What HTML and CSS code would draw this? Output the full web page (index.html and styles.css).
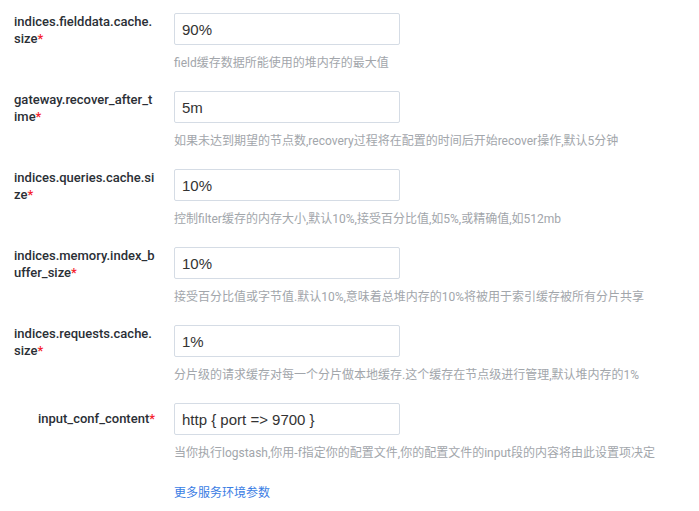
FILE: index.html
```html
<!DOCTYPE html>
<html lang="zh">
<head>
<meta charset="utf-8">
<link rel="stylesheet" href="styles.css">
</head>
<body>
<form class="form">
  <div class="row">
    <label class="label">indices.fielddata.cache.size<span class="req">*</span></label>
    <div class="control">
      <input class="input" value="90%">
      <div class="help">field缓存数据所能使用的堆内存的最大值</div>
    </div>
  </div>
  <div class="row">
    <label class="label">gateway.recover_after_time<span class="req">*</span></label>
    <div class="control">
      <input class="input" value="5m">
      <div class="help">如果未达到期望的节点数,recovery过程将在配置的时间后开始recover操作,默认5分钟</div>
    </div>
  </div>
  <div class="row">
    <label class="label">indices.queries.cache.size<span class="req">*</span></label>
    <div class="control">
      <input class="input" value="10%">
      <div class="help">控制filter缓存的内存大小,默认10%,接受百分比值,如5%,或精确值,如512mb</div>
    </div>
  </div>
  <div class="row">
    <label class="label">indices.memory.index_buffer_size<span class="req">*</span></label>
    <div class="control">
      <input class="input" value="10%">
      <div class="help">接受百分比值或字节值.默认10%,意味着总堆内存的10%将被用于索引缓存被所有分片共享</div>
    </div>
  </div>
  <div class="row">
    <label class="label">indices.requests.cache.size<span class="req">*</span></label>
    <div class="control">
      <input class="input" value="1%">
      <div class="help">分片级的请求缓存对每一个分片做本地缓存.这个缓存在节点级进行管理,默认堆内存的1%</div>
    </div>
  </div>
  <div class="row">
    <label class="label label-single">input_conf_content<span class="req">*</span></label>
    <div class="control">
      <input class="input" value="http { port =&gt; 9700 }">
      <div class="help">当你执行logstash,你用-f指定你的配置文件,你的配置文件的input段的内容将由此设置项决定</div>
    </div>
  </div>
  <div class="more-row">
    <a class="more" href="#">更多服务环境参数</a>
  </div>
</form>
</body>
</html>
```
FILE: styles.css
```css
html, body {
  margin: 0;
  padding: 0;
  background: #fff;
}
body {
  font-family: Roboto, "Noto Sans CJK SC", sans-serif;
  color: #333;
}
.form {
  padding: 13px 0 0 14px;
}
.row {
  display: flex;
  align-items: flex-start;
  height: 78px;
}
.label {
  width: 141px;
  flex: none;
  margin-right: 19px;
  font-family: Roboto, "Noto Sans CJK SC", sans-serif;
  font-size: 13px;
  font-weight: 500;
  line-height: 17px;
  color: #2b2f36;
  word-break: break-all;
}
.label-single {
  text-align: right;
  line-height: 32px;
}
.req {
  color: #f5222d;
}
.control {
  display: flex;
  flex-direction: column;
}
.input {
  box-sizing: border-box;
  width: 226px;
  height: 32px;
  margin: 0;
  padding: 0 7px;
  border: 1px solid #d5dce5;
  border-radius: 2px;
  font-family: "Liberation Sans", "Noto Sans CJK SC", sans-serif;
  font-size: 15px;
  color: #333;
  outline: none;
}
.help {
  margin-top: 8px;
  font-family: Roboto, "Noto Sans CJK SC", sans-serif;
  font-size: 12px;
  line-height: 20px;
  color: #a2a6ab;
  white-space: nowrap;
}
.more-row {
  padding-left: 160px;
  padding-top: 1px;
}
.more {
  font-size: 12px;
  line-height: 20px;
  color: #3a7de4;
  text-decoration: none;
}
```
